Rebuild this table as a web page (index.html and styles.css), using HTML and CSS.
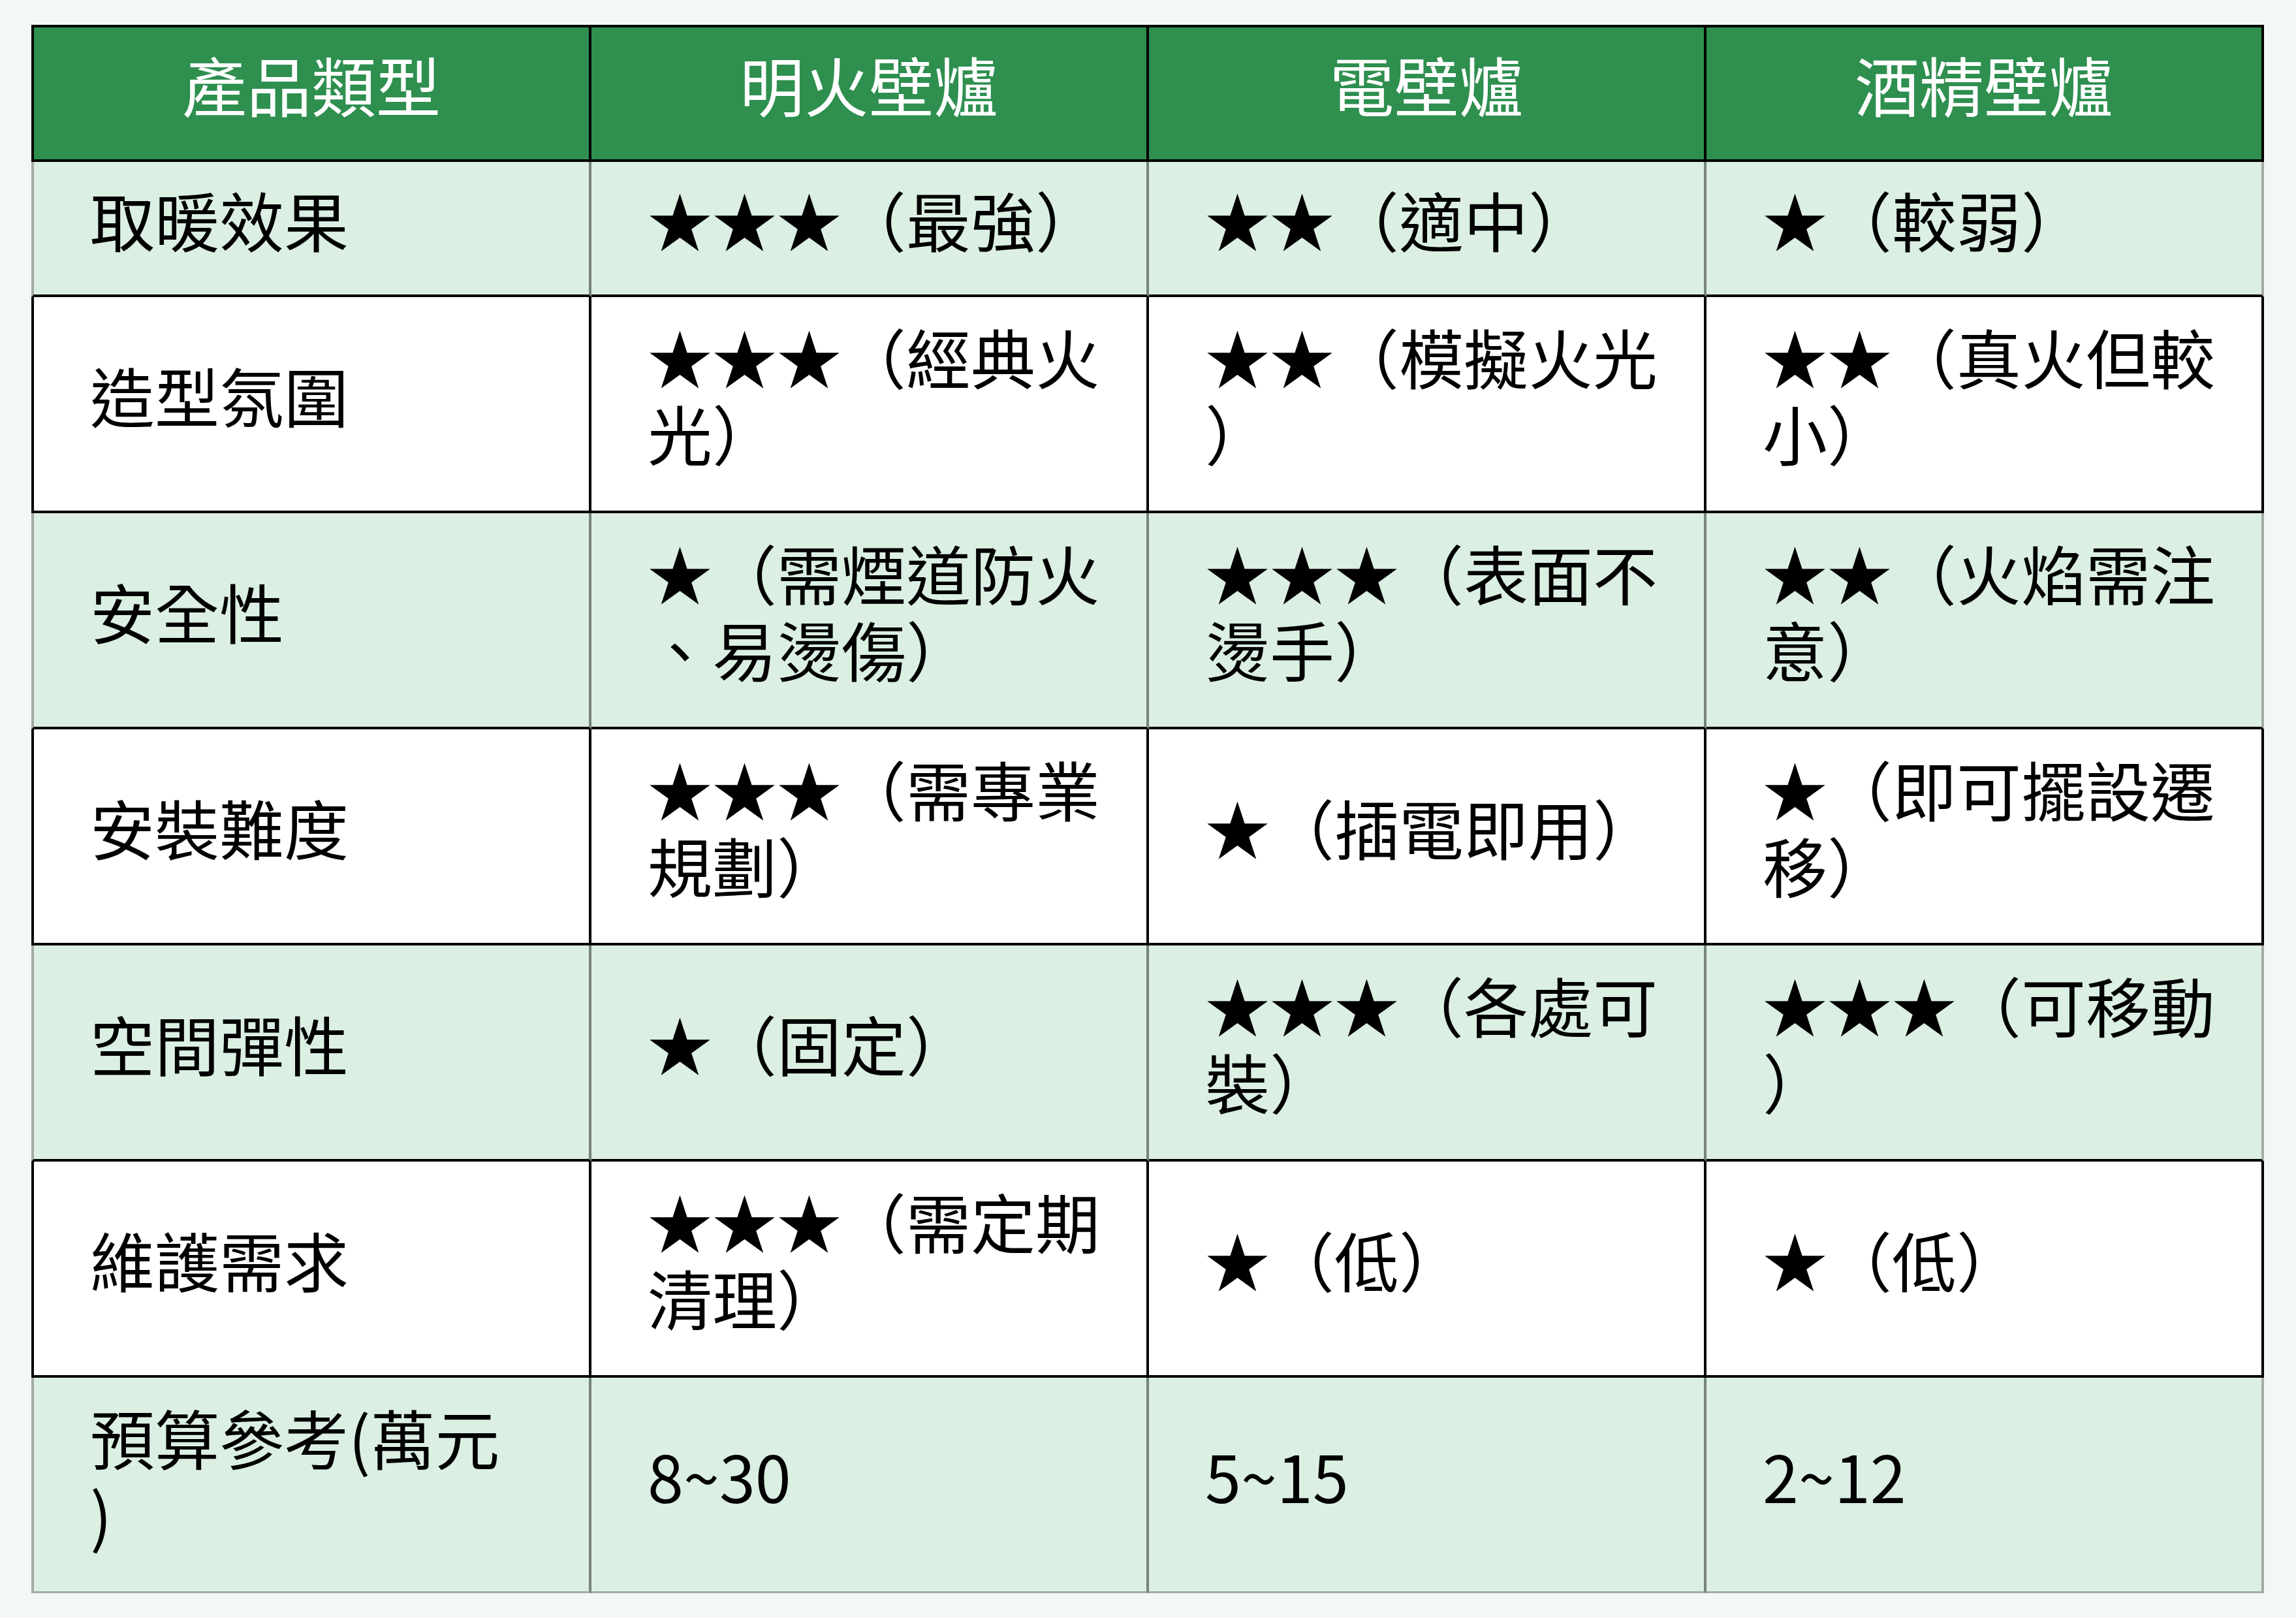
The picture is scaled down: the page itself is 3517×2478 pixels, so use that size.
FILE: index.html
```html
<!DOCTYPE html>
<html lang="zh-Hant">
<head>
<meta charset="utf-8">
<title>壁爐比較表</title>
<link rel="stylesheet" href="styles.css">
</head>
<body>
<div class="page">
  <div class="grid" role="table">
    <div class="cell head first" role="columnheader">產品類型</div>
    <div class="cell head" role="columnheader">明火壁爐</div>
    <div class="cell head" role="columnheader">電壁爐</div>
    <div class="cell head last" role="columnheader">酒精壁爐</div>

    <div class="cell tint first">取暖效果</div>
    <div class="cell tint">★★★（最強）</div>
    <div class="cell tint">★★（適中）</div>
    <div class="cell tint last">★（較弱）</div>

    <div class="cell plain first">造型氛圍</div>
    <div class="cell plain"><span class="ln">★★★（經典火</span><span class="ln">光）</span></div>
    <div class="cell plain"><span class="ln">★★（模擬火光</span><span class="ln">）</span></div>
    <div class="cell plain last"><span class="ln">★★（真火但較</span><span class="ln">小）</span></div>

    <div class="cell tint first">安全性</div>
    <div class="cell tint"><span class="ln">★（需煙道防火</span><span class="ln">、易燙傷）</span></div>
    <div class="cell tint"><span class="ln">★★★（表面不</span><span class="ln">燙手）</span></div>
    <div class="cell tint last"><span class="ln">★★（火焰需注</span><span class="ln">意）</span></div>

    <div class="cell plain first">安裝難度</div>
    <div class="cell plain"><span class="ln">★★★（需專業</span><span class="ln">規劃）</span></div>
    <div class="cell plain">★（插電即用）</div>
    <div class="cell plain last"><span class="ln">★（即可擺設遷</span><span class="ln">移）</span></div>

    <div class="cell tint first">空間彈性</div>
    <div class="cell tint">★（固定）</div>
    <div class="cell tint"><span class="ln">★★★（各處可</span><span class="ln">裝）</span></div>
    <div class="cell tint last"><span class="ln">★★★（可移動</span><span class="ln">）</span></div>

    <div class="cell plain first">維護需求</div>
    <div class="cell plain"><span class="ln">★★★（需定期</span><span class="ln">清理）</span></div>
    <div class="cell plain">★（低）</div>
    <div class="cell plain last">★（低）</div>

    <div class="cell tint first bottom"><span class="ln">預算參考(萬元</span><span class="ln">)</span></div>
    <div class="cell tint bottom">8~30</div>
    <div class="cell tint bottom">5~15</div>
    <div class="cell tint last bottom">2~12</div>
  </div>
</div>
</body>
</html>
```
FILE: styles.css
```css
html, body {
  margin: 0;
  padding: 0;
  background: #f3f8f5;
}

.page {
  padding: 38px 0 0 48px;
  height: 2440px;
  box-sizing: border-box;
}

.grid {
  display: grid;
  grid-template-columns: 858px 854px 854px 854px;
  grid-template-rows: 210px 207px repeat(6, 331px);
  width: 3420px;
  font-family: "Noto Sans CJK TC", "Noto Sans CJK SC", sans-serif;
  font-size: 99px;
  line-height: 117px;
  color: #000;
}

.cell {
  box-sizing: border-box;
  display: flex;
  flex-direction: column;
  justify-content: center;
  padding: 0 20px 29px 86px;
  white-space: nowrap;
  border-right: 4px solid #000;
  border-bottom: 4px solid #000;
}

.ln {
  display: block;
  height: 117px;
}

.cell.first {
  border-left: 4px solid #000;
}

.head {
  background: #2e8f4f;
  color: #fff;
  border-top: 4px solid #000;
  align-items: center;
  text-align: center;
  padding-left: 0;
  padding-right: 0;
}

.plain {
  background: #fff;
}

.tint {
  background: #dbefe3;
  border-right-color: #77837b;
}

.tint.first {
  border-left-color: #a4aba6;
}

.tint.last {
  border-right-color: #a4aba6;
}

.tint.bottom {
  border-bottom-color: #a4aba6;
}
```
